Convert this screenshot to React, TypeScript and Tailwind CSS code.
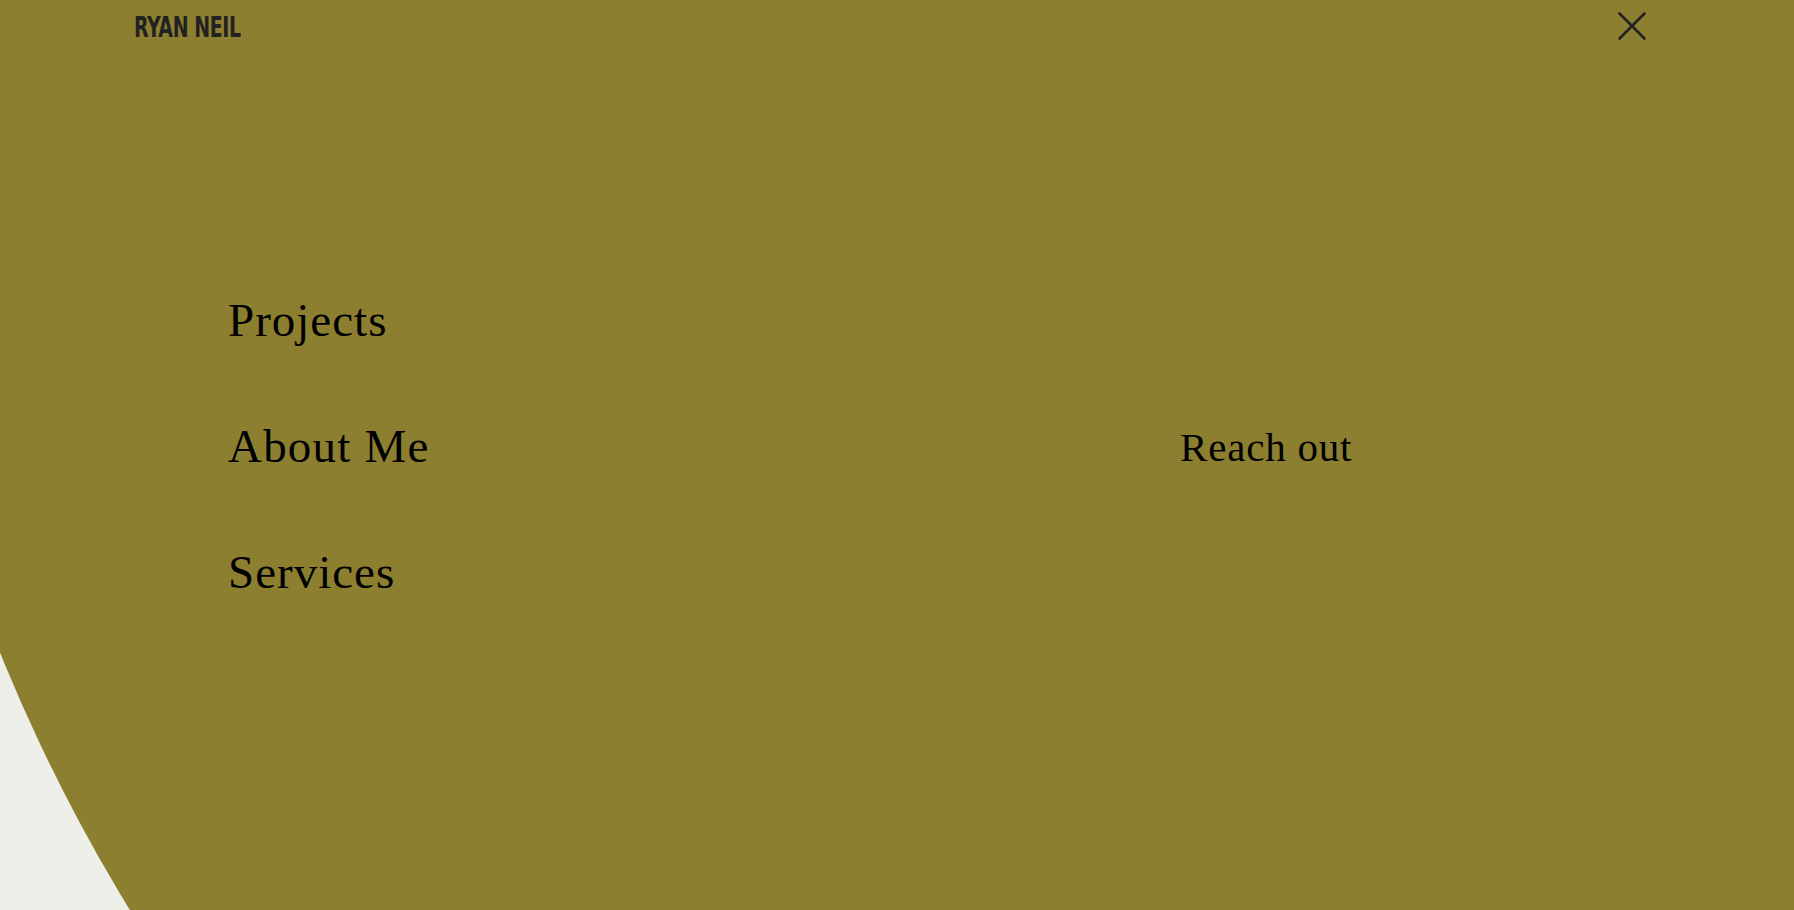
import React from "react";

export default function App() {
  const serif = { fontFamily: '"Liberation Serif", "Times New Roman", serif' };
  return (
    <div className="relative w-full h-[910px] overflow-hidden bg-[#efefe9]">
      <div className="absolute inset-0 bg-[#8c7f2f] [clip-path:circle(1761px_at_1632px_-9px)]">
        <header className="flex justify-between items-start pl-[134px] pr-[148px] pt-[12px]">
          <div
            className="mt-[2px] inline-block origin-left scale-x-[0.78] scale-y-[1.05] text-[27px] leading-[27px] font-bold tracking-[-0.5px] text-[#222222]"
            style={{ fontFamily: '"Liberation Sans Narrow", "DejaVu Sans Condensed", sans-serif' }}
          >
            RYAN NEIL
          </div>
          <button className="w-[28px] h-[28px] p-0 text-[#222222]" aria-label="Close menu">
            <svg width="28" height="28" viewBox="0 0 28 28" fill="none" stroke="currentColor" strokeWidth="2.6" strokeLinecap="round">
              <line x1="1.5" y1="1.5" x2="26.5" y2="26.5" />
              <line x1="26.5" y1="1.5" x2="1.5" y2="26.5" />
            </svg>
          </button>
        </header>
        <div className="flex mt-[256px] pl-[228px]">
          <nav className="w-[952px] flex flex-col gap-[79px]" style={serif}>
            <a className="text-[47px] leading-[47px] tracking-[1px] text-black">Projects</a>
            <a className="text-[47px] leading-[47px] tracking-[1.2px] text-black">About Me</a>
            <a className="text-[47px] leading-[47px] tracking-[1px] text-black">Services</a>
          </nav>
          <div className="pt-[130px]" style={serif}>
            <a className="text-[41px] leading-[41px] tracking-[0.8px] text-black">Reach out</a>
          </div>
        </div>
      </div>
    </div>
  );
}
